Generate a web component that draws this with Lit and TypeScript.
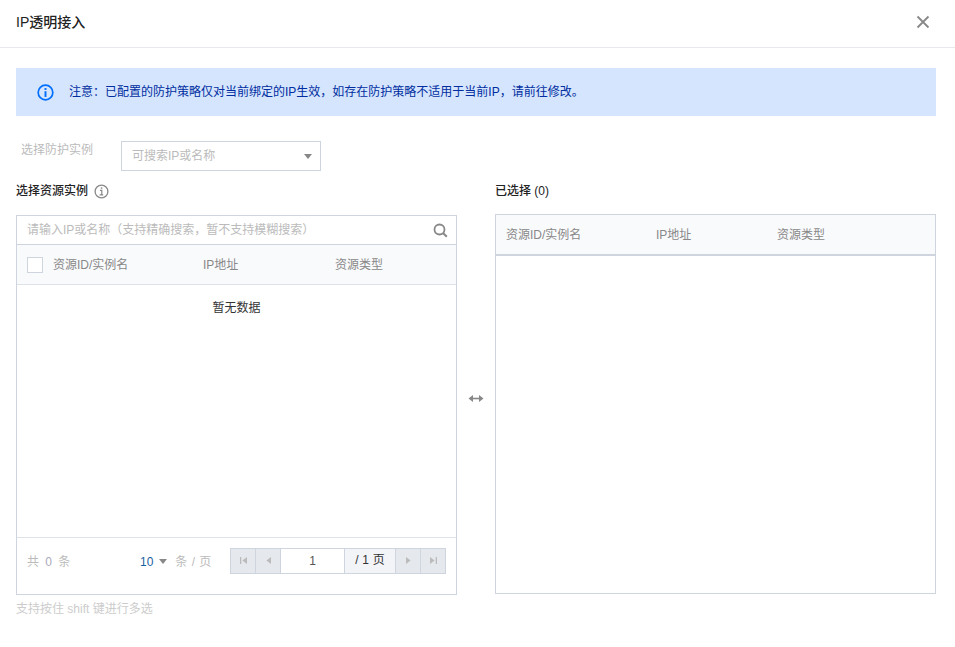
import { LitElement, html, css } from "lit";
import { customElement } from "lit/decorators.js";

@customElement("app-root")
export class AppRoot extends LitElement {
  static styles = css`
    :host { display: block; width: 955px; height: 647px; background: #fff; overflow: hidden;
      font-family: "Liberation Sans", "Noto Sans CJK SC", sans-serif; font-size: 12px; color: #000; line-height: 18px; }
    * { box-sizing: border-box; }
    .head { height: 48px; border-bottom: 1px solid #e7e9ec; padding: 0 25px 3px 16px; display: flex; align-items: center; justify-content: space-between; }
    .title { font-size: 14px; font-weight: 500; color: #222; }
    .close { display: block; }
    .body { padding: 20px 19px 0 16px; }
    .alert { height: 48px; background: #d4e5fd; display: flex; align-items: center; padding-left: 21px; gap: 15px; color: #002da0; }
    .form { display: flex; margin-top: 25px; height: 30px; }
    .form label { width: 105px; padding: 1px 0 0 5px; color: #bbb; line-height: 16px; }
    .select { width: 200px; height: 30px; border: 1px solid #cfd5de; display: flex; align-items: center; justify-content: space-between; padding: 0 8px 0 10px; color: #bbb; }
    .tri { width: 0; height: 0; border: 4px solid transparent; border-top: 5px solid #888; border-bottom: 0; }
    .columns { display: flex; gap: 38px; margin-top: 11px; }
    .col { width: 441px; position: relative; }
    .col-title { display: flex; align-items: center; gap: 6px; height: 18px; font-weight: 500; color: #222; }
    .box { border: 1px solid #cfd5de; display: flex; flex-direction: column; }
    .left .box { height: 380px; margin-top: 15px; }
    .right .box { height: 380px; margin-top: 14px; }
    .search { height: 28px; display: flex; align-items: center; justify-content: space-between; padding: 0 8px 0 10px; color: #bbb; flex: none; }
    .thead { display: flex; align-items: center; background: #f9fafc; color: #888; flex: none; }
    .left .thead { height: 41px; border-top: 1px solid #cfd5de; border-bottom: 1px solid #dde1e8; padding-left: 10px; }
    .right .thead { height: 41px; border-bottom: 2px solid #cfd5de; padding-left: 10px; }
    .check { width: 16px; height: 16px; border: 1px solid #cfd5de; background: #fff; margin-right: 10px; flex: none; }
    .left .c1 { width: 150px; } .left .c2 { width: 132px; }
    .right .c1 { width: 150px; } .right .c2 { width: 121px; }
    .content { flex: 1; }
    .empty { text-align: center; padding-top: 14px; color: #333; }
    .pager { height: 57px; flex: none; border-top: 1px solid #dde1e8; display: flex; align-items: center; padding: 0 10px 11px 10px; color: #bbb; }
    .total { width: 113px; letter-spacing: 0.5px; word-spacing: 2px; margin-top: 2px; }
    .total b { font-weight: 400; color: #aab; }
    .size { display: flex; align-items: center; gap: 6px; width: 90px; margin-top: 2px; }
    .size .unit { margin-left: 2px; word-spacing: 1px; }
    .size .num { color: #1a5f9e; }
    .btns { display: flex; height: 26px; border: 1px solid #cfd5de; }
    .btn { width: 25px; background: #e5e8ed; border-right: 1px solid #cfd5de; display: flex; align-items: center; justify-content: center; }
    .btn:last-child { border-right: 0; width: 24px; }
    .page { width: 64px; background: #fff; border-right: 1px solid #cfd5de; text-align: center; color: #555; line-height: 24px; }
    .of { width: 51px; background: #f2f4f8; border-right: 1px solid #cfd5de; text-align: center; color: #333; line-height: 22px; word-spacing: 0.5px; }
    .hint { color: #ccc; margin-top: 5px; }
    .swap { position: absolute; left: 452px; top: 212px; display: block; }
  `;

  private thead(check: boolean) {
    return html`<div class="thead">
      ${check ? html`<span class="check"></span>` : ""}
      <span class="c1">资源ID/实例名</span><span class="c2">IP地址</span><span>资源类型</span>
    </div>`;
  }

  render() {
    return html`
      <div class="head">
        <span class="title">IP透明接入</span>
        <svg class="close" width="14" height="14" viewBox="0 0 14 14"><path d="M1.5 1.5l11 11M12.5 1.5l-11 11" stroke="#888" stroke-width="1.8" fill="none"/></svg>
      </div>
      <div class="body">
        <div class="alert">
          <svg width="17" height="17" viewBox="0 0 16 16"><circle cx="8" cy="8" r="6.9" fill="none" stroke="#006eff" stroke-width="1.6"/><rect x="7.1" y="3.8" width="1.8" height="1.8" fill="#006eff"/><rect x="7.1" y="6.8" width="1.8" height="5.4" fill="#006eff"/></svg>
          <span>注意：已配置的防护策略仅对当前绑定的IP生效，如存在防护策略不适用于当前IP，请前往修改。</span>
        </div>
        <div class="form">
          <label>选择防护实例</label>
          <div class="select"><span>可搜索IP或名称</span><span class="tri"></span></div>
        </div>
        <div class="columns">
          <div class="col left">
            <div class="col-title">选择资源实例
              <svg width="15" height="15" viewBox="0 0 15 15"><circle cx="7.5" cy="7.5" r="6.4" fill="none" stroke="#888" stroke-width="1.3"/><rect x="6.8" y="3.3" width="1.5" height="1.5" fill="#888"/><path d="M5.9 6.4h1.9v4.2M5.6 10.8h3.6" stroke="#888" stroke-width="1.2" fill="none"/></svg>
            </div>
            <div class="box">
              <div class="search"><span>请输入IP或名称（支持精确搜索，暂不支持模糊搜索）</span>
                <svg width="15" height="15" viewBox="0 0 15 15"><circle cx="6.5" cy="6.5" r="5" fill="none" stroke="#888" stroke-width="1.8"/><path d="M10.2 10.2l3.6 3.6" stroke="#888" stroke-width="2" fill="none"/></svg>
              </div>
              ${this.thead(true)}
              <div class="content"><div class="empty">暂无数据</div></div>
              <div class="pager">
                <span class="total">共 <b>0</b> 条</span>
                <span class="size"><span class="num">10</span><span class="tri"></span><span class="unit">条 / 页</span></span>
                <div class="btns">
                  <span class="btn"><svg width="9" height="9" viewBox="0 0 9 9"><path d="M1 1h1.3v7H1zM8 1v7L3.4 4.5z" fill="#bbb"/></svg></span>
                  <span class="btn"><svg width="9" height="9" viewBox="0 0 9 9"><path d="M7 1v7L2.4 4.5z" fill="#bbb"/></svg></span>
                  <span class="page">1</span>
                  <span class="of">/ 1 页</span>
                  <span class="btn"><svg width="9" height="9" viewBox="0 0 9 9"><path d="M2 1v7l4.6-3.5z" fill="#bbb"/></svg></span>
                  <span class="btn"><svg width="9" height="9" viewBox="0 0 9 9"><path d="M8 1H6.7v7H8zM1 1v7l4.6-3.5z" fill="#bbb"/></svg></span>
                </div>
              </div>
            </div>
            <div class="hint">支持按住 shift 键进行多选</div>
            <svg class="swap" width="16" height="9" viewBox="0 0 16 9"><path d="M3 4.5h10" stroke="#888" stroke-width="1.6"/><path d="M0.5 4.5L5 1v7zM15.5 4.5L11 1v7z" fill="#888"/></svg>
          </div>
          <div class="col right">
            <div class="col-title">已选择 (0)</div>
            <div class="box">
              ${this.thead(false)}
              <div class="content"></div>
            </div>
          </div>
        </div>
      </div>
    `;
  }
}
